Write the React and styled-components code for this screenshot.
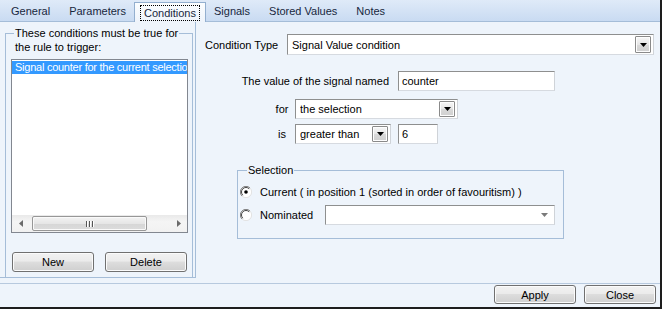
import React from 'react';
import styled, { createGlobalStyle, css } from 'styled-components';

const GlobalStyle = createGlobalStyle`
  html, body { margin: 0; padding: 0; background: #ffffff; }
  body { font-family: "Liberation Sans", Arial, sans-serif; font-size: 11px; color: #000; }
  * { box-sizing: border-box; }
`;

const Window = styled.div`
  width: 662px;
  height: 309px;
  display: flex;
  flex-direction: column;
  background: #eef4fb;
  border-right: 2px solid #1d1d1d;
  border-bottom: 2px solid #1d1d1d;
  overflow: hidden;
`;

const TabStrip = styled.div`
  flex: none;
  height: 22px;
  display: flex;
  align-items: flex-end;
  padding-left: 2px;
  background: linear-gradient(#dfeaf8, #c9dbf2);
  border-bottom: 1px solid #a5bdd8;
`;

const Tab = styled.div`
  height: 20px;
  padding: 0 9px;
  margin-right: 1px;
  display: flex;
  align-items: center;
  color: #18273d;
  white-space: nowrap;
  ${(p) =>
    p.$active &&
    css`
      margin: 0 -1px -1px -2px;
      padding: 0 5px;
      height: 20px;
      background: linear-gradient(#fbfdff, #eef4fb);
      border: 1px solid #93afcf;
      border-bottom: none;
    `}
`;

const Focus = styled.span`
  border: 1px dotted #000;
  padding: 1px 3px;
  line-height: 12px;
`;

const Body = styled.div`
  flex: 1;
  min-height: 0;
  display: flex;
  padding-bottom: 5px;
`;

const LeftPanel = styled.div`
  flex: none;
  width: 196px;
  display: flex;
  flex-direction: column;
  border-right: 1px solid #a5bdd8;
  border-bottom: 1px solid #a5bdd8;
  padding: 11px 2px 0 5px;
`;

const GroupBox = styled.div`
  position: relative;
  border: 1px solid #a5bdd8;
  ${(p) => p.$open && css`border-bottom: none;`}
  ${(p) => p.$flex && css`flex: 1;`}
  display: flex;
  flex-direction: column;
`;

const Legend = styled.div`
  position: absolute;
  top: -8px;
  left: ${(p) => p.$left || 8}px;
  padding: 0 1px;
  line-height: 14px;
  background: #eef4fb;
  white-space: nowrap;
`;

const ListBox = styled.div`
  margin: 25px 0 0 5px;
  width: 177px;
  height: 174px;
  border: 1px solid #828790;
  background: #fff;
  display: flex;
  flex-direction: column;
`;

const ListItems = styled.div`
  flex: 1;
  padding-top: 1px;
  overflow: hidden;
`;

const ListItem = styled.div`
  height: 13px;
  line-height: 13px;
  padding-left: 3px;
  white-space: nowrap;
  overflow: hidden;
  letter-spacing: -0.25px;
  ${(p) => p.$selected && css`background: #3399ff; color: #fff;`}
`;

const HScroll = styled.div`
  flex: none;
  height: 17px;
  display: flex;
  align-items: center;
  background: linear-gradient(#e9e9e9, #f5f5f5 40%, #f1f1f1);
`;

const ScrollArrow = styled.div`
  width: 17px;
  height: 17px;
  display: flex;
  align-items: center;
  justify-content: center;
`;

const Track = styled.div`
  flex: 1;
  height: 17px;
  display: flex;
  align-items: center;
  padding-left: 3px;
`;

const Thumb = styled.div`
  width: 115px;
  height: 15px;
  border: 1px solid #979797;
  border-radius: 2px;
  background: linear-gradient(#f3f3f3, #e6e6e6 50%, #d6d6d6 51%, #dcdcdc);
  box-shadow: inset 0 0 0 1px #fafafa;
  display: flex;
  align-items: center;
  justify-content: center;
`;

const Grip = styled.div`
  display: flex;
  gap: 1px;
  span {
    width: 1px;
    height: 6px;
    background: #555;
    box-shadow: 1px 0 0 #fff;
  }
  span + span { margin-left: 1px; }
`;

const ButtonRow = styled.div`
  display: flex;
  gap: 11px;
  margin: 19px 0 0 6px;
`;

const Button = styled.button`
  width: ${(p) => p.$w || 82}px;
  height: ${(p) => p.$h || 20}px;
  padding: 0;
  font-family: "Liberation Sans", Arial, sans-serif;
  font-size: 11px;
  color: #000;
  border: 1px solid #707070;
  border-radius: 3px;
  background: linear-gradient(#f2f2f2, #ebebeb 45%, #dddddd 50%, #cfcfcf);
  box-shadow: inset 0 0 0 1px #fbfbfb;
`;

const RightPanel = styled.div`
  flex: 1;
  padding: 12px 0 0 9px;
  display: flex;
  flex-direction: column;
`;

const Row = styled.div`
  display: flex;
  align-items: center;
  margin-top: ${(p) => p.$mt || 0}px;
  gap: ${(p) => p.$gap || 0}px;
`;

const Label = styled.div`
  flex: none;
  width: ${(p) => p.$w}px;
  margin-left: ${(p) => p.$ml || 0}px;
  text-align: ${(p) => p.$align || 'left'};
  white-space: nowrap;
`;

const fieldBorder = css`
  border: 1px solid;
  border-color: #8e8f8f #cfd3d8 #d6dae0 #8e8f8f;
  background: #fff;
`;

const Combo = styled.div`
  ${fieldBorder}
  flex: none;
  width: ${(p) => p.$w}px;
  height: ${(p) => p.$h || 20}px;
  display: flex;
  align-items: center;
  padding: 0 2px 0 4px;
`;

const ComboText = styled.div`
  flex: 1;
  white-space: nowrap;
  overflow: hidden;
`;

const DropButton = styled.div`
  flex: none;
  width: 16px;
  height: ${(p) => p.$h || 16}px;
  border: 1px solid #8a8a8a;
  border-radius: 1px;
  background: linear-gradient(#f7f7f7, #e6e6e6 50%, #d9d9d9 51%, #cfcfcf);
  box-shadow: inset 0 0 0 1px #fdfdfd;
  display: flex;
  align-items: center;
  justify-content: center;
`;

const PlainArrow = styled.div`
  flex: none;
  width: 16px;
  display: flex;
  align-items: center;
  justify-content: center;
`;

const TextBox = styled.div`
  ${fieldBorder}
  flex: none;
  width: ${(p) => p.$w}px;
  height: 20px;
  padding-left: 3px;
  line-height: 18px;
  margin-left: ${(p) => p.$ml || 0}px;
`;

const SelectionBox = styled(GroupBox)`
  margin: 26px 0 0 32px;
  width: 327px;
  height: 69px;
  padding: 13px 0 0 2px;
`;

const RadioRow = styled.div`
  display: flex;
  align-items: center;
  height: ${(p) => p.$h || 16}px;
  margin-top: ${(p) => p.$mt || 0}px;
`;

const RadioText = styled.div`
  margin-left: 8px;
  width: ${(p) => (p.$w ? `${p.$w}px` : 'auto')};
  white-space: nowrap;
`;

const Footer = styled.div`
  flex: none;
  height: 24px;
  border-top: 1px solid #b7c9de;
  display: flex;
  justify-content: flex-end;
  align-items: flex-start;
  gap: 8px;
  padding: 1px 4px 0 0;
`;

const DownTri = ({ color = '#000' }) => (
  <svg width="7" height="4" viewBox="0 0 7 4">
    <path d="M0 0h7L3.5 4z" fill={color} />
  </svg>
);

const SideTri = ({ dir }) => (
  <svg width="4" height="7" viewBox="0 0 4 7">
    <path d={dir === 'left' ? 'M4 0v7L0 3.5z' : 'M0 0v7l4-3.5z'} fill="#6b6b6b" />
  </svg>
);

const Radio = ({ checked }) => (
  <svg width="12" height="12" viewBox="0 0 12 12">
    <circle cx="6" cy="6" r="5.5" fill="#fff" />
    <path d="M10 2A5.5 5.5 0 0 0 2 10" fill="none" stroke="#7d7d7d" strokeWidth="1" />
    <path d="M10 2A5.5 5.5 0 0 1 2 10" fill="none" stroke="#e2e2e2" strokeWidth="1" />
    <path d="M9.2 2.8A4.5 4.5 0 0 0 2.8 9.2" fill="none" stroke="#444" strokeWidth="1" />
    {checked && <circle cx="6" cy="6" r="1.8" fill="#000" />}
  </svg>
);

const tabs = ['General', 'Parameters', 'Conditions', 'Signals', 'Stored Values', 'Notes'];

export default function App() {
  return (
    <>
      <GlobalStyle />
      <Window>
        <TabStrip>
          {tabs.map((t) =>
            t === 'Conditions' ? (
              <Tab key={t} $active>
                <Focus>{t}</Focus>
              </Tab>
            ) : (
              <Tab key={t}>{t}</Tab>
            )
          )}
        </TabStrip>
        <Body>
          <LeftPanel>
            <GroupBox $open $flex>
              <Legend $left={8}>
                These conditions must be true for
                <br />
                the rule to trigger:
              </Legend>
              <ListBox>
                <ListItems>
                  <ListItem $selected>Signal counter for the current selection</ListItem>
                </ListItems>
                <HScroll>
                  <ScrollArrow>
                    <SideTri dir="left" />
                  </ScrollArrow>
                  <Track>
                    <Thumb>
                      <Grip>
                        <span />
                        <span />
                        <span />
                      </Grip>
                    </Thumb>
                  </Track>
                  <ScrollArrow>
                    <SideTri dir="right" />
                  </ScrollArrow>
                </HScroll>
              </ListBox>
              <ButtonRow>
                <Button>New</Button>
                <Button>Delete</Button>
              </ButtonRow>
            </GroupBox>
          </LeftPanel>
          <RightPanel>
            <Row>
              <Label $w={82}>Condition Type</Label>
              <Combo $w={367} $h={21}>
                <ComboText>Signal Value condition</ComboText>
                <DropButton $h={17}>
                  <DownTri />
                </DropButton>
              </Combo>
            </Row>
            <Row $mt={16} $gap={9}>
              <Label $w={184} $align="right">The value of the signal named</Label>
              <TextBox $w={157}>counter</TextBox>
            </Row>
            <Row $mt={8} $gap={2}>
              <Label $w={22} $ml={66} $align="center">for</Label>
              <Combo $w={163}>
                <ComboText>the selection</ComboText>
                <DropButton>
                  <DownTri />
                </DropButton>
              </Combo>
            </Row>
            <Row $mt={5} $gap={2}>
              <Label $w={22} $ml={66} $align="center">is</Label>
              <Combo $w={96}>
                <ComboText>greater than</ComboText>
                <DropButton>
                  <DownTri />
                </DropButton>
              </Combo>
              <TextBox $w={40} $ml={5}>6</TextBox>
            </Row>
            <SelectionBox>
              <Legend $left={9}>Selection</Legend>
              <RadioRow>
                <Radio checked />
                <RadioText>Current ( in position 1 (sorted in order of favouritism) )</RadioText>
              </RadioRow>
              <RadioRow $h={20} $mt={5}>
                <Radio />
                <RadioText $w={65}>Nominated</RadioText>
                <Combo $w={230}>
                  <ComboText />
                  <PlainArrow>
                    <DownTri color="#7a7a7a" />
                  </PlainArrow>
                </Combo>
              </RadioRow>
            </SelectionBox>
          </RightPanel>
        </Body>
        <Footer>
          <Button $w={82} $h={19}>Apply</Button>
          <Button $w={72} $h={19}>Close</Button>
        </Footer>
      </Window>
    </>
  );
}
